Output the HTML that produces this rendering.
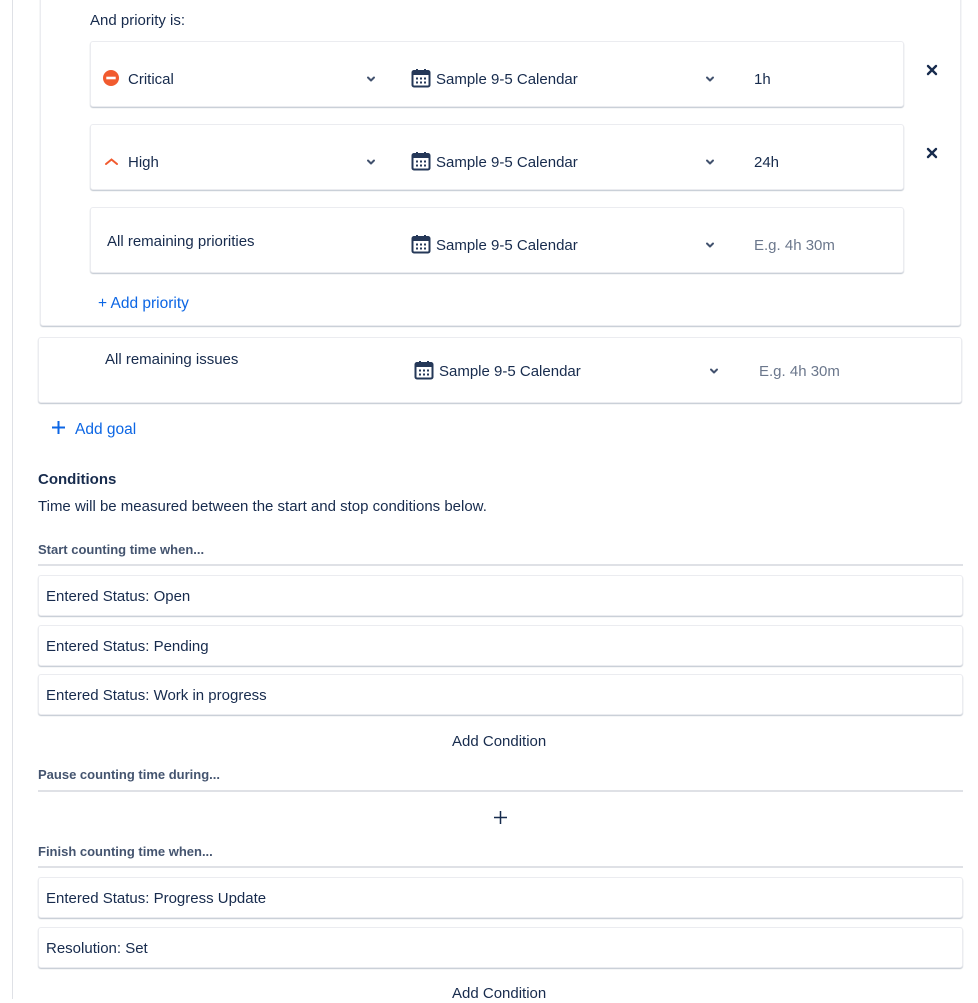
<!DOCTYPE html>
<html><head><meta charset="utf-8"><style>
*{box-sizing:border-box;margin:0;padding:0}
body{width:978px;height:999px;background:#fff;font-family:"Liberation Sans",sans-serif;color:#172b4d;font-size:15px;position:relative;overflow:hidden}
.a{position:absolute;white-space:nowrap}
.card{position:absolute;background:#fff;border:1px solid #ebecf0;border-radius:3px;box-shadow:0 1px 1px rgba(9,30,66,.25)}
.t{position:absolute;white-space:nowrap;line-height:18px;margin-top:2px}
.lbl{font-size:13px;font-weight:bold;color:#44546f}
.line{position:absolute;left:38px;width:925px;height:2px;background:#dfe1e6}
.blue{color:#0c66e4}
.ph{color:#6b778c}
</style></head><body>
<svg width="0" height="0" style="position:absolute"><defs>
<symbol id="cal" viewBox="0 0 20 20"><rect x="1.5" y="3" width="17" height="15.5" rx="1.5" fill="none" stroke="#253858" stroke-width="2"/><rect x="1.5" y="3" width="17" height="4" fill="#253858"/><rect x="5" y="1" width="2" height="4" fill="#253858"/><rect x="13" y="1" width="2" height="4" fill="#253858"/><g fill="#253858"><rect x="5" y="9.5" width="2" height="2"/><rect x="9" y="9.5" width="2" height="2"/><rect x="13" y="9.5" width="2" height="2"/><rect x="5" y="13.5" width="2" height="2"/><rect x="9" y="13.5" width="2" height="2"/><rect x="13" y="13.5" width="2" height="2"/></g></symbol>
<symbol id="chev" viewBox="0 0 10 10"><path d="M2 3.5 5 6.5 8 3.5" fill="none" stroke="#42526e" stroke-width="2" stroke-linecap="round" stroke-linejoin="round"/></symbol>
<symbol id="x" viewBox="0 0 12 12"><path d="M2 2 10 10M10 2 2 10" stroke="#172b4d" stroke-width="2.4" stroke-linecap="round"/></symbol>
</defs></svg>
<div style="position:absolute;left:12px;top:0;width:1px;height:999px;background:#dfe1e6"></div>
<div class="card" style="left:40px;top:-10px;width:921px;height:336px"></div>
<div class="t" style="left:90px;top:10px">And priority is:</div>

<div class="card" style="left:90px;top:41px;width:814px;height:66px"></div>
<svg class="a" style="left:103px;top:70px" width="16" height="16"><circle cx="8" cy="8" r="8" fill="#f15b2f"/><rect x="3.3" y="6.7" width="9.4" height="2.6" fill="#fff"/></svg>
<div class="t" style="left:128px;top:69px">Critical</div>
<svg class="a" style="left:366px;top:74px" width="10" height="10"><use href="#chev"/></svg>
<svg class="a" style="left:411px;top:68px" width="20" height="20"><use href="#cal"/></svg>
<div class="t" style="left:436px;top:69px">Sample 9-5 Calendar</div>
<svg class="a" style="left:705px;top:74px" width="10" height="10"><use href="#chev"/></svg>
<div class="t" style="left:754px;top:69px">1h</div>
<svg class="a" style="left:926px;top:64px" width="12" height="12"><use href="#x"/></svg>

<div class="card" style="left:90px;top:124px;width:814px;height:66px"></div>
<svg class="a" style="left:104px;top:157px" width="15" height="10"><path d="M2 7 7.5 2.5 13 7" fill="none" stroke="#f15b2f" stroke-width="2" stroke-linecap="round"/></svg>
<div class="t" style="left:128px;top:152px">High</div>
<svg class="a" style="left:366px;top:157px" width="10" height="10"><use href="#chev"/></svg>
<svg class="a" style="left:411px;top:151px" width="20" height="20"><use href="#cal"/></svg>
<div class="t" style="left:436px;top:152px">Sample 9-5 Calendar</div>
<svg class="a" style="left:705px;top:157px" width="10" height="10"><use href="#chev"/></svg>
<div class="t" style="left:754px;top:152px">24h</div>
<svg class="a" style="left:926px;top:147px" width="12" height="12"><use href="#x"/></svg>

<div class="card" style="left:90px;top:207px;width:814px;height:66px"></div>
<div class="t" style="left:107px;top:231px">All remaining priorities</div>
<svg class="a" style="left:411px;top:234px" width="20" height="20"><use href="#cal"/></svg>
<div class="t" style="left:436px;top:235px">Sample 9-5 Calendar</div>
<svg class="a" style="left:705px;top:240px" width="10" height="10"><use href="#chev"/></svg>
<div class="t ph" style="left:754px;top:235px">E.g. 4h 30m</div>

<div class="t blue" style="left:98px;top:293px;font-size:15.5px">+ Add priority</div>

<div class="card" style="left:38px;top:337px;width:924px;height:66px"></div>
<div class="t" style="left:105px;top:349px">All remaining issues</div>
<svg class="a" style="left:414px;top:360px" width="20" height="20"><use href="#cal"/></svg>
<div class="t" style="left:439px;top:361px">Sample 9-5 Calendar</div>
<svg class="a" style="left:709px;top:366px" width="10" height="10"><use href="#chev"/></svg>
<div class="t ph" style="left:759px;top:361px">E.g. 4h 30m</div>

<svg class="a" style="left:52px;top:421px" width="13" height="13"><path d="M6.5 0v13M0 6.5h13" stroke="#0c66e4" stroke-width="2"/></svg>
<div class="t blue" style="left:75px;top:419px;font-size:15.5px">Add goal</div>

<div class="t" style="left:38px;top:469px;font-weight:bold">Conditions</div>
<div class="t" style="left:38px;top:496px">Time will be measured between the start and stop conditions below.</div>

<div class="t lbl" style="left:38px;top:539px">Start counting time when...</div>
<div class="line" style="top:564px"></div>
<div class="card" style="left:38px;top:575px;width:925px;height:41px"></div>
<div class="t" style="left:46px;top:586px">Entered Status: Open</div>
<div class="card" style="left:38px;top:625px;width:925px;height:41px"></div>
<div class="t" style="left:46px;top:636px">Entered Status: Pending</div>
<div class="card" style="left:38px;top:674px;width:925px;height:41px"></div>
<div class="t" style="left:46px;top:685px">Entered Status: Work in progress</div>
<div class="t" style="left:452px;top:731px">Add Condition</div>

<div class="t lbl" style="left:38px;top:764px">Pause counting time during...</div>
<div class="line" style="top:790px"></div>
<svg class="a" style="left:494px;top:811px" width="13" height="13"><path d="M6.5 0v13M0 6.5h13" stroke="#172b4d" stroke-width="1.5"/></svg>

<div class="t lbl" style="left:38px;top:841px">Finish counting time when...</div>
<div class="line" style="top:866px"></div>
<div class="card" style="left:38px;top:877px;width:925px;height:41px"></div>
<div class="t" style="left:46px;top:888px">Entered Status: Progress Update</div>
<div class="card" style="left:38px;top:927px;width:925px;height:41px"></div>
<div class="t" style="left:46px;top:938px">Resolution: Set</div>
<div class="t" style="left:452px;top:983px">Add Condition</div>
</body></html>
